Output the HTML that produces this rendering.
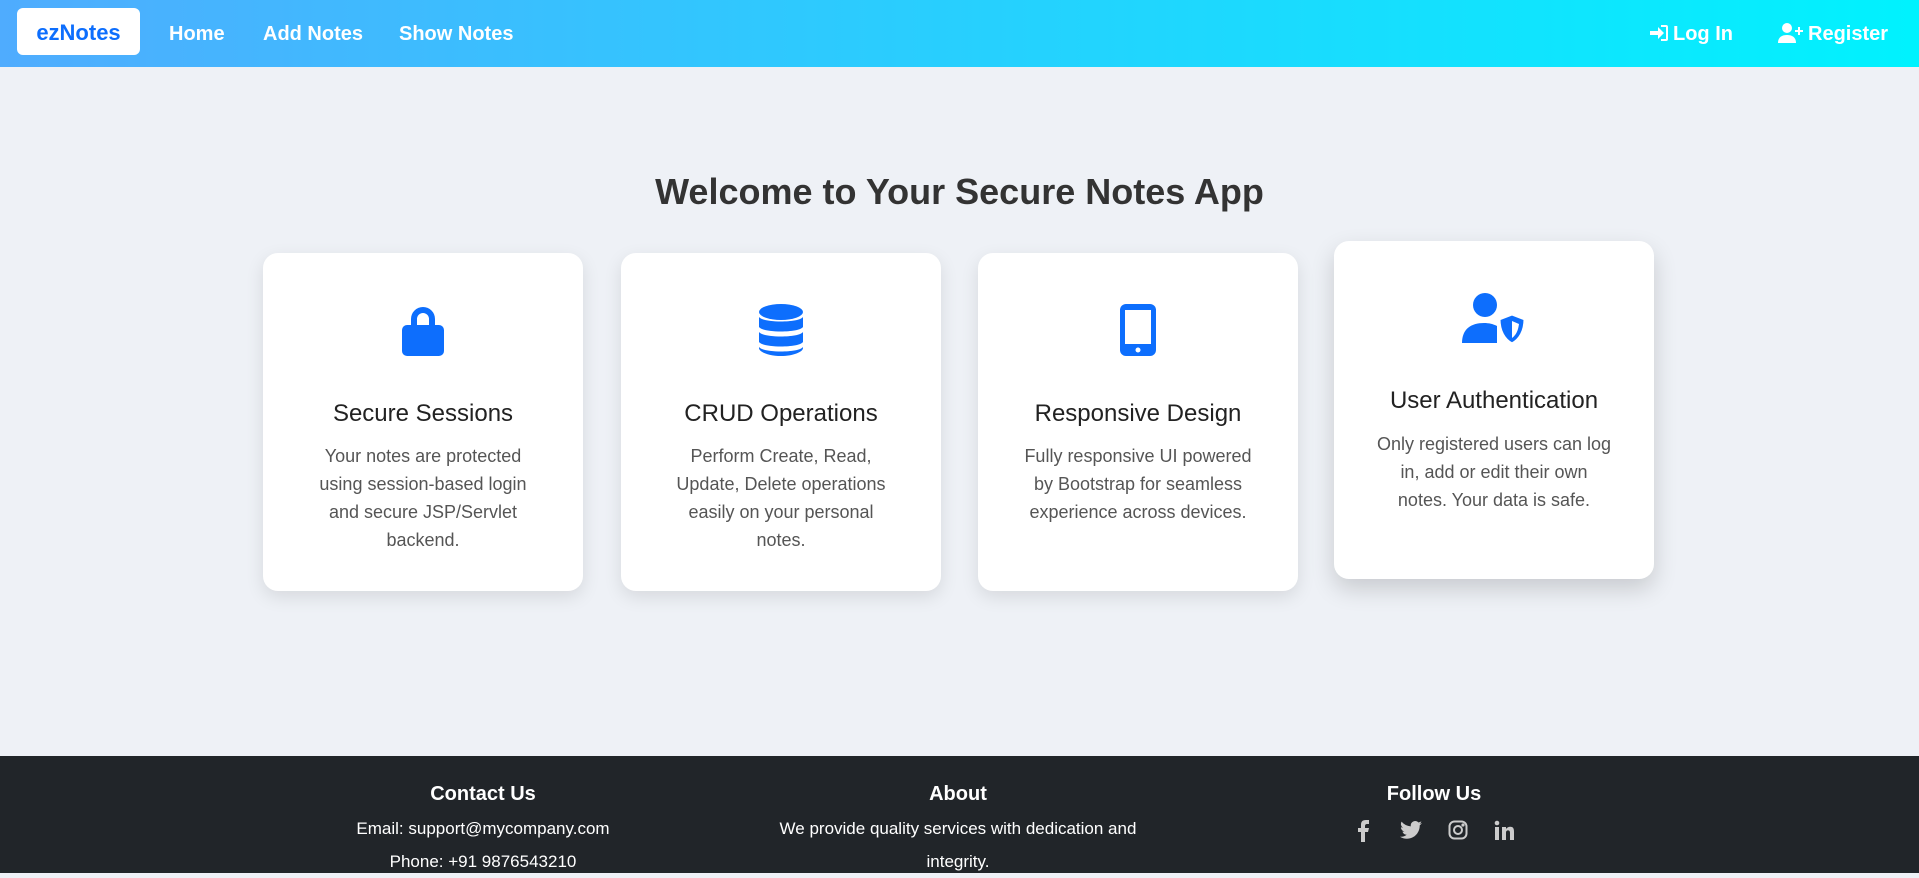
<!DOCTYPE html>
<html><head><meta charset="utf-8"><style>
*{box-sizing:border-box;margin:0;padding:0}
body{width:1919px;height:873px;overflow:hidden;background:#eef1f6;font-family:"Liberation Sans",sans-serif;position:relative}
.nav{position:absolute;left:0;top:0;width:1919px;height:67px;background:linear-gradient(to right,#4facfe,#00f2fe)}
.brand{position:absolute;left:17px;top:8px;width:123px;height:47px;background:#fff;border-radius:6px;color:#0d6efd;font-weight:bold;font-size:22px;text-align:center;line-height:49px}
.nl{position:absolute;top:23px;color:#fff;font-size:20px;font-weight:bold}
.nl svg{vertical-align:-3px;margin-right:4px}
h1{position:absolute;top:171px;left:0;width:1919px;text-align:center;font-size:36px;font-weight:bold;color:#333}
.card{position:absolute;width:320px;height:338px;background:#fff;border-radius:15px;box-shadow:0 6px 18px rgba(0,0,0,.1);text-align:center}
.card svg{position:absolute;left:50%;transform:translateX(-50%);top:51px}
.card h3{position:absolute;top:147px;width:100%;font-size:24px;font-weight:normal;color:#222}
.card p{position:absolute;top:189px;left:44px;right:44px;font-size:18px;line-height:28px;color:#555}
.foot{position:absolute;left:0;top:756px;width:1919px;height:117px;background:#212529;color:#fff}
.col{position:absolute;top:26px;width:420px;text-align:center;font-size:17px;line-height:33px}
.col h4{font-size:20px;margin-bottom:6px;line-height:24px}
.soc{display:flex;justify-content:center;gap:26px;margin-top:14px}
</style></head><body>
<div class="nav">
<div class="brand">ezNotes</div>
<div class="nl" style="left:169px">Home</div>
<div class="nl" style="left:263px">Add Notes</div>
<div class="nl" style="left:399px">Show Notes</div>
<div class="nl" style="left:1649px"><svg width="20" height="20" viewBox="0 0 20 20" fill="#fff"><path d="M1 8h8V4l6 6-6 6v-4H1z"/><path d="M12 2h5a2 2 0 0 1 2 2v12a2 2 0 0 1-2 2h-5v-2h5V4h-5z"/></svg>Log In</div>
<div class="nl" style="left:1778px"><svg width="26" height="20" viewBox="0 0 26 20" fill="#fff"><circle cx="9" cy="5" r="5"/><path d="M0 20c0-6 4-8 9-8s9 2 9 8z"/><path d="M20 4h2v3h3v2h-3v3h-2V9h-3V7h3z"/></svg>Register</div>
</div>
<h1>Welcome to Your Secure Notes App</h1>

<div class="card" style="left:263px;top:253px">
<svg width="46" height="52" viewBox="0 0 46 52"><path d="M11 22v-7a12 12 0 0 1 24 0v7h-6v-7a6 6 0 0 0-12 0v7z" fill="#0d6efd"/><rect x="2" y="21" width="42" height="31" rx="5" fill="#0d6efd"/></svg>
<h3>Secure Sessions</h3><p>Your notes are protected using session-based login and secure JSP/Servlet backend.</p></div>

<div class="card" style="left:621px;top:253px">
<svg width="46" height="52" viewBox="0 0 46 52" fill="#0d6efd"><ellipse cx="23" cy="8" rx="22" ry="8"/><path d="M1 13c4 6 40 6 44 0v10c-4 6-40 6-44 0z"/><path d="M1 28c4 6 40 6 44 0v10c-4 6-40 6-44 0z"/><path d="M1 43c4 6 40 6 44 0v1c0 4-10 8-22 8S1 48 1 44z"/></svg>
<h3>CRUD Operations</h3><p style="left:50px;right:50px">Perform Create, Read, Update, Delete operations easily on your personal notes.</p></div>

<div class="card" style="left:978px;top:253px">
<svg width="36" height="52" viewBox="0 0 36 52"><rect x="0" y="0" width="36" height="52" rx="6" fill="#0d6efd"/><rect x="5" y="6" width="26" height="34" fill="#fff"/><circle cx="18" cy="46" r="2.5" fill="#fff"/></svg>
<h3>Responsive Design</h3><p>Fully responsive UI powered by Bootstrap for seamless experience across devices.</p></div>

<div class="card" style="left:1334px;top:241px;box-shadow:0 10px 24px rgba(0,0,0,.16)">
<svg width="64" height="52" viewBox="0 0 64 52" style="top:52px"><circle cx="23" cy="12" r="12" fill="#0d6efd"/><path d="M0 50c0-14 9-20 22-20 5 0 9 1 13 3v17z" fill="#0d6efd"/><path d="M50 21l13 5c0 12-5 21-13 25-8-4-13-13-13-25z" fill="#0d6efd" stroke="#fff" stroke-width="3"/><path d="M50 28l7 3c-1 7-3 11-7 14z" fill="#fff"/></svg>
<h3 style="top:146px">User Authentication</h3><p style="top:189px;left:40px;right:40px">Only registered users can log in, add or edit their own notes. Your data is safe.</p></div>

<div class="foot">
<div class="col" style="left:273px"><h4>Contact Us</h4>Email: support@mycompany.com<br>Phone: +91 9876543210</div>
<div class="col" style="left:748px"><h4>About</h4>We provide quality services with dedication and<br>integrity.</div>
<div class="col" style="left:1224px"><h4>Follow Us</h4>
<div class="soc">
<svg width="20" height="22" viewBox="0 0 20 22" fill="#ccc"><path d="M11 22V12h3l1-4h-4V6c0-1 .5-2 2-2h2V0h-3c-4 0-5 2-5 5v3H4v4h3v10z"/></svg>
<svg width="22" height="20" viewBox="0 0 24 20" fill="#ccc"><path d="M24 2.5c-.9.4-1.8.6-2.8.8 1-.6 1.8-1.6 2.1-2.7-1 .6-2 1-3.1 1.2A4.9 4.9 0 0 0 11.8 6 14 14 0 0 1 1.7.9a4.9 4.9 0 0 0 1.5 6.6c-.8 0-1.6-.3-2.2-.6 0 2.4 1.7 4.4 3.9 4.8-.7.2-1.5.2-2.2.1.6 2 2.4 3.4 4.6 3.4A9.9 9.9 0 0 1 0 17.3 14 14 0 0 0 7.5 19.5c9 0 14-7.5 14-14v-.6c1-.7 1.8-1.5 2.5-2.4z"/></svg>
<svg width="20" height="20" viewBox="0 0 20 20" fill="none" stroke="#ccc" stroke-width="2"><rect x="1.5" y="1.5" width="17" height="17" rx="5"/><circle cx="10" cy="10" r="4"/><circle cx="15" cy="5" r=".6" fill="#ccc"/></svg>
<svg width="20" height="20" viewBox="0 0 20 20" fill="#ccc"><rect x="1" y="7" width="4" height="13"/><circle cx="3" cy="3" r="2.3"/><path d="M8 7h4v2c1-1.5 2.5-2.3 4.3-2.3 3 0 3.7 2 3.7 5V20h-4v-7c0-1.5-.4-2.6-2-2.6s-2 1.2-2 2.6v7H8z"/></svg>
</div></div>
</div>
</body></html>
